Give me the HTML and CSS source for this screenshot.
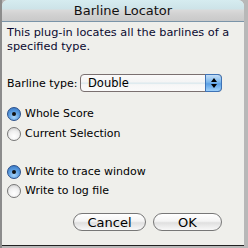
FILE: index.html
```html
<!DOCTYPE html>
<html>
<head>
<meta charset="utf-8">
<link rel="stylesheet" href="styles.css">
</head>
<body>
<div class="desk">
  <div class="win">
    <div class="titlebar">Barline Locator</div>
    <div class="content">
      <p class="desc">This plug-in locates all the barlines of a specified type.</p>
      <div class="row">
        <span class="label">Barline type:</span>
        <div class="popup">
          <span class="popval">Double</span>
          <span class="arrows">
            <svg width="8" height="12" viewBox="0 0 8 12"><path d="M4 1 L7 5 L1 5 Z M4 11 L7 7 L1 7 Z" fill="#000"/></svg>
          </span>
        </div>
      </div>
      <div class="group g1">
        <div class="radio sel"><span class="dot on"></span>Whole Score</div>
        <div class="radio"><span class="dot"></span>Current Selection</div>
      </div>
      <div class="group g2">
        <div class="radio sel"><span class="dot on"></span>Write to trace window</div>
        <div class="radio"><span class="dot"></span>Write to log file</div>
      </div>
      <div class="buttons">
        <div class="btn cancel">Cancel</div>
        <div class="btn ok">OK</div>
      </div>
    </div>
  </div>
</div>
</body>
</html>
```

FILE: styles.css
```css
html, body { margin: 0; padding: 0; }
body { width: 248px; height: 248px; overflow: hidden; background: #9a9a9a; }
.desk {
  width: 248px; height: 248px;
  background: linear-gradient(to right, #8c8c8c 0, #8c8c8c 2px, transparent 2px),
              #b8b8b8;
  padding: 0 4px 2px 2px; box-sizing: border-box;
}
.win {
  height: 246px;
  background: #efefeb;
  border-radius: 6px 6px 0 0;
  border-bottom: 1px solid #222;
  box-sizing: border-box;
  display: flex; flex-direction: column;
  font-family: "DejaVu Sans", sans-serif;
  color: #000;
}
.titlebar {
  height: 22px;
  box-sizing: border-box;
  border-radius: 6px 6px 0 0;
  background: linear-gradient(to bottom, #d6ecf0 0, #cde3e8 9px, #dadada 10px, #d2d2d2 14px, #c9c9c9 21px);
  border-bottom: 1px solid #7a94a8;
  text-align: center;
  font-size: 13px;
  line-height: 22px;
  color: #111;
}
.content { padding: 4px 0 0 5px; display: flex; flex-direction: column; font-size: 11px; }
.desc { margin: 0; width: 232px; line-height: 14px; color: #0a0a30; font-size: 11.3px; }
.row { display: flex; align-items: center; margin-top: 20px; height: 18px; }
.label { width: 73px; }
.popup {
  width: 142px; height: 18px; box-sizing: border-box;
  border: 1px solid #7a7070; border-radius: 4px;
  background: linear-gradient(to bottom, #fafafa 0, #f4f4f4 45%, #d4e6ec 50%, #f6f6f6 60%, #fafafa 100%);
  display: flex; align-items: center; justify-content: space-between;
}
.popval { padding-left: 7px; font-size: 11.5px; }
.arrows {
  width: 17px; height: 18px; margin: -1px -1px -1px 0;
  border-radius: 0 4px 4px 0;
  background: linear-gradient(to bottom, #c4def6 0, #7ab6ec 45%, #5aa0e6 55%, #9ed0fa 100%);
  border: 1px solid #3e73b6; box-sizing: border-box;
  display: flex; align-items: center; justify-content: center;
}
.group { display: flex; flex-direction: column; gap: 5px; }
.g1 { margin-top: 14px; }
.g2 { margin-top: 23px; gap: 4px; }
.radio { display: flex; align-items: center; height: 15px; gap: 4px; }
.dot {
  width: 14px; height: 14px; border-radius: 50%; box-sizing: border-box;
  border: 1px solid #777;
  background: radial-gradient(circle at 50% 70%, #ffffff 0, #f0f0f0 50%, #c8c8c8 100%);
  position: relative;
}
.dot.on {
  border-color: #2a4f8a;
  background: radial-gradient(circle at 50% 75%, #a8d4fa 0, #5b9de0 50%, #2f6fc0 100%);
}
.dot.on::after {
  content: ""; position: absolute; left: 4px; top: 4px; width: 4px; height: 4px; border-radius: 50%;
  background: #111;
}
.buttons { display: flex; justify-content: flex-end; gap: 7px; margin-top: 15px; padding-right: 22px; }
.btn {
  height: 18px; box-sizing: border-box; border: 1px solid #777; border-radius: 9px;
  background: linear-gradient(to bottom, #ffffff 0, #f4f4f4 45%, #e0e0e0 55%, #f8f8f8 100%);
  display: flex; align-items: center; justify-content: center;
  font-size: 13px;
}
.cancel { width: 73px; }
.ok { width: 69px; }
```
